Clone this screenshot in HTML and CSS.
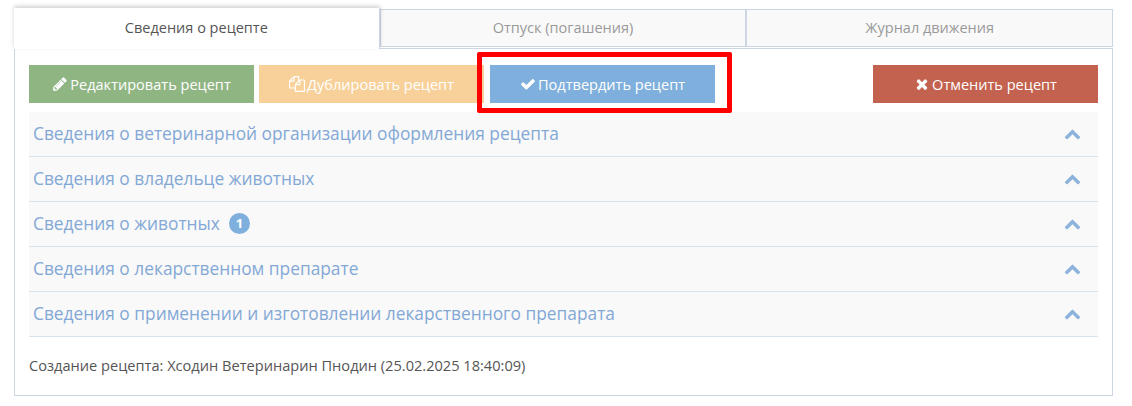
FILE: index.html
```html
<!DOCTYPE html>
<html lang="ru">
<head>
<meta charset="utf-8">
<title>Сведения о рецепте</title>
<link rel="stylesheet" href="styles.css">
</head>
<body>
<div class="widget">
  <div class="tabs">
    <div class="tab active">Сведения о рецепте</div>
    <div class="tab">Отпуск (погашения)</div>
    <div class="tab">Журнал движения</div>
  </div>
  <div class="panel">
    <div class="actions">
      <a class="btn green"><svg class="ico" viewBox="0 0 1792 1792"><path d="M491 1536l91-91-235-235-91 91v107h128v128h107zm523-928q0-22-22-22-10 0-17 7l-542 542q-7 7-7 17 0 22 22 22 10 0 17-7l542-542q7-7 7-17zm-54-192l416 416-832 832h-416v-416zm683 96q0 53-37 90l-166 166-416-416 166-165q36-38 90-38 53 0 91 38l235 234q37 39 37 91z"/></svg>Редактировать рецепт</a>
      <a class="btn orange"><svg class="ico" viewBox="0 0 1792 1792"><path d="M1696 384q40 0 68 28t28 68v1216q0 40-28 68t-68 28h-960q-40 0-68-28t-28-68v-288h-544q-40 0-68-28t-28-68v-672q0-40 20-88t48-76l408-408q28-28 76-48t88-20h416q40 0 68 28t28 68v328q68-40 128-40h416zm-544 213l-299 299h299v-299zm-640-384l-299 299h299v-299zm196 647l316-316v-416h-384v416q0 40-28 68t-68 28h-416v640h512v-256q0-40 20-88t48-76zm956 804v-1152h-384v416q0 40-28 68t-68 28h-416v640h896z"/></svg>Дублировать рецепт</a>
      <a class="btn blue"><svg class="ico" viewBox="0 0 1792 1792"><path d="M1671 566q0 40-28 68l-724 724-136 136q-28 28-68 28t-68-28l-136-136-362-362q-28-28-28-68t28-68l136-136q28-28 68-28t68 28l294 295 656-657q28-28 68-28t68 28l136 136q28 28 28 68z"/></svg>Подтвердить рецепт<span class="highlight"></span></a>
      <a class="btn red"><svg class="ico" viewBox="0 0 1792 1792"><path d="M1490 1322q0 40-28 68l-136 136q-28 28-68 28t-68-28l-294-294-294 294q-28 28-68 28t-68-28l-136-136q-28-28-28-68t28-68l294-294-294-294q-28-28-28-68t28-68l136-136q28-28 68-28t68 28l294 294 294-294q28-28 68-28t68 28l136 136q28 28 28 68t-28 68l-294 294 294 294q28 28 28 68z"/></svg>Отменить рецепт</a>
    </div>
    <div class="accordion">
      <div class="row"><span class="title">Сведения о ветеринарной организации оформления рецепта</span><svg class="chev" viewBox="0 0 1792 1792"><path d="M1683 1331l-166 165q-19 19-45 19t-45-19l-531-531-531 531q-19 19-45 19t-45-19l-166-165q-19-19-19-45.5t19-45.5l742-741q19-19 45-19t45 19l742 741q19 19 19 45.5t-19 45.5z"/></svg></div>
      <div class="row"><span class="title">Сведения о владельце животных</span><svg class="chev" viewBox="0 0 1792 1792"><path d="M1683 1331l-166 165q-19 19-45 19t-45-19l-531-531-531 531q-19 19-45 19t-45-19l-166-165q-19-19-19-45.5t19-45.5l742-741q19-19 45-19t45 19l742 741q19 19 19 45.5t-19 45.5z"/></svg></div>
      <div class="row"><span class="title">Сведения о животных</span><span class="badge">1</span><svg class="chev" viewBox="0 0 1792 1792"><path d="M1683 1331l-166 165q-19 19-45 19t-45-19l-531-531-531 531q-19 19-45 19t-45-19l-166-165q-19-19-19-45.5t19-45.5l742-741q19-19 45-19t45 19l742 741q19 19 19 45.5t-19 45.5z"/></svg></div>
      <div class="row"><span class="title">Сведения о лекарственном препарате</span><svg class="chev" viewBox="0 0 1792 1792"><path d="M1683 1331l-166 165q-19 19-45 19t-45-19l-531-531-531 531q-19 19-45 19t-45-19l-166-165q-19-19-19-45.5t19-45.5l742-741q19-19 45-19t45 19l742 741q19 19 19 45.5t-19 45.5z"/></svg></div>
      <div class="row"><span class="title">Сведения о применении и изготовлении лекарственного препарата</span><svg class="chev" viewBox="0 0 1792 1792"><path d="M1683 1331l-166 165q-19 19-45 19t-45-19l-531-531-531 531q-19 19-45 19t-45-19l-166-165q-19-19-19-45.5t19-45.5l742-741q19-19 45-19t45 19l742 741q19 19 19 45.5t-19 45.5z"/></svg></div>
    </div>
    <p class="created">Создание рецепта: Хсодин Ветеринарин Пнодин (25.02.2025 18:40:09)</p>
  </div>
</div>
</body>
</html>
```

FILE: styles.css
```css
html, body {
  margin: 0;
  padding: 0;
  background: #fff;
}
body {
  font-family: "Open Sans", sans-serif;
  font-size: 14px;
  color: #555;
}
.widget {
  width: 1099px;
  margin: 8px 0 0 14px;
}
.tabs {
  display: flex;
  height: 40px;
}
.tab {
  flex: 1 1 0;
  display: flex;
  align-items: center;
  justify-content: center;
  margin-top: 1px;
  height: 38px;
  box-sizing: border-box;
  padding-bottom: 2px;
  background: #f9f9f9;
  border: 1px solid #cdd6e4;
  color: #999;
  font-size: 14.5px;
}
.tab.active {
  margin-top: 0;
  height: 41px;
  padding-bottom: 3px;
  background: #fff;
  border: 0;
  border-right: 1px solid #cdd6e4;
  color: #555;
  position: relative;
  z-index: 1;
  box-shadow: 0 -2px 4px rgba(0, 0, 0, 0.18);
}
.panel {
  box-sizing: border-box;
  height: 348px;
  padding: 16px 14px 0;
  border: 1px solid #cdd6e4;
  background: #fff;
}
.actions {
  display: flex;
  gap: 5px;
  height: 38px;
}
.btn {
  position: relative;
  width: 225px;
  height: 38px;
  display: flex;
  align-items: center;
  justify-content: center;
  color: #fff;
  font-size: 14.55px;
}
.btn.green { background: #8fb583; }
.btn.orange { background: #f8d19a; }
.btn.blue { background: #7fafdc; margin-left: 1px; }
.btn.red { background: #c3624f; margin-left: auto; }
.ico {
  width: 16px;
  height: 16px;
  fill: currentColor;
  margin-right: 2px;
}
.highlight {
  position: absolute;
  left: -13px;
  top: -13px;
  width: 255px;
  height: 61px;
  box-sizing: border-box;
  border: 5px solid #fe0000;
  border-radius: 2px;
}
.accordion {
  margin-top: 9px;
}
.row {
  height: 45px;
  box-sizing: border-box;
  display: flex;
  align-items: center;
  padding: 0 17px 2px 4px;
  background: #f9f9f9;
  border-bottom: 1px solid #d9e3ef;
  color: #83a8d6;
  font-size: 17.33px;
}
.badge {
  width: 21px;
  height: 21px;
  margin-left: 9px;
  border-radius: 50%;
  background: #7fafdc;
  color: #fff;
  font-size: 13px;
  font-weight: 700;
  display: flex;
  align-items: center;
  justify-content: center;
}
.chev {
  width: 17px;
  height: 17px;
  margin-left: auto;
  fill: #8db3dd;
}
.created {
  margin: 19px 0 0;
  font-size: 14.6px;
  line-height: 19px;
  color: #555;
}
```
